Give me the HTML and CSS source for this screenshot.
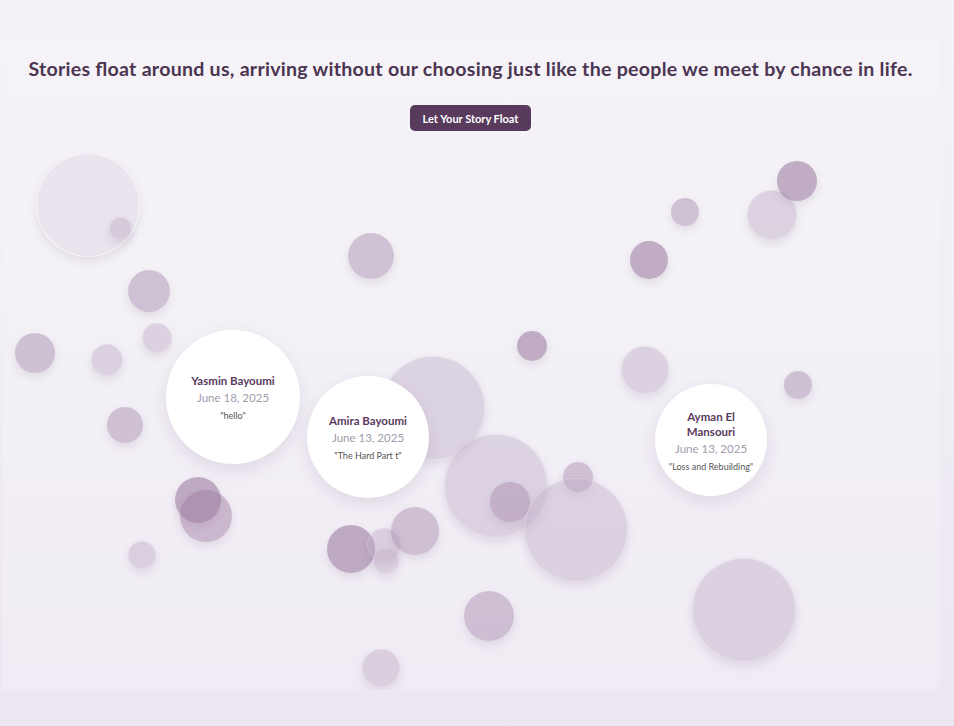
FILE: index.html
```html
<!DOCTYPE html>
<html lang="en">
<head>
<meta charset="utf-8">
<title>Floating Stories</title>
<link rel="stylesheet" href="styles.css">
</head>
<body>
<main class="stage">
  <header class="intro">
    <h1 class="headline">Stories ﬂoat around us, arriving without our choosing just like the people we meet by chance in life.</h1>
    <button class="float-btn">Let Your Story Float</button>
  </header>
  <section class="sky">
    <span class="bubble faint" style="--x:34px;--y:13px;--d:104px"></span>
    <span class="bubble light" style="--x:107px;--y:77px;--d:23px"></span>
    <span class="bubble mid" style="--x:346px;--y:93px;--d:46px"></span>
    <span class="bubble mid" style="--x:126px;--y:130px;--d:42px"></span>
    <span class="bubble mid" style="--x:13px;--y:193px;--d:40px"></span>
    <span class="bubble light" style="--x:89px;--y:204px;--d:32px"></span>
    <span class="bubble light" style="--x:140px;--y:183px;--d:30px"></span>
    <span class="bubble mid" style="--x:105px;--y:267px;--d:36px"></span>
    <span class="bubble dark" style="--x:173px;--y:337px;--d:46px"></span>
    <span class="bubble mid2" style="--x:178px;--y:350px;--d:52px"></span>
    <span class="bubble light" style="--x:126px;--y:401px;--d:28px"></span>
    <span class="bubble big" style="--x:379px;--y:216px;--d:104px"></span>
    <span class="bubble dark" style="--x:515px;--y:191px;--d:30px"></span>
    <span class="bubble big" style="--x:442px;--y:294px;--d:104px"></span>
    <span class="bubble mid" style="--x:488px;--y:342px;--d:40px"></span>
    <span class="bubble mid" style="--x:561px;--y:322px;--d:30px"></span>
    <span class="bubble big" style="--x:522px;--y:338px;--d:104px"></span>
    <span class="bubble dark" style="--x:325px;--y:385px;--d:48px"></span>
    <span class="bubble light" style="--x:365px;--y:388px;--d:34px"></span>
    <span class="bubble light" style="--x:371px;--y:408px;--d:26px"></span>
    <span class="bubble mid" style="--x:389px;--y:367px;--d:48px"></span>
    <span class="bubble mid" style="--x:462px;--y:451px;--d:50px"></span>
    <span class="bubble light" style="--x:360px;--y:509px;--d:38px"></span>
    <span class="bubble big" style="--x:690px;--y:418px;--d:104px"></span>
    <span class="bubble light" style="--x:619px;--y:206px;--d:48px"></span>
    <span class="bubble dark" style="--x:628px;--y:101px;--d:38px"></span>
    <span class="bubble mid" style="--x:669px;--y:58px;--d:28px"></span>
    <span class="bubble light" style="--x:745px;--y:50px;--d:50px"></span>
    <span class="bubble dark" style="--x:775px;--y:21px;--d:40px"></span>
    <span class="bubble mid" style="--x:782px;--y:231px;--d:28px"></span>

    <article class="story" style="--x:164px;--y:190px;--d:134px">
      <h2 class="story-name">Yasmin Bayoumi</h2>
      <p class="story-date">June 18, 2025</p>
      <p class="story-title">"hello"</p>
    </article>
    <article class="story" style="--x:305px;--y:236px;--d:122px">
      <h2 class="story-name">Amira Bayoumi</h2>
      <p class="story-date">June 13, 2025</p>
      <p class="story-title">"The Hard Part t"</p>
    </article>
    <article class="story" style="--x:653px;--y:244px;--d:112px">
      <h2 class="story-name narrow">Ayman El Mansouri</h2>
      <p class="story-date">June 13, 2025</p>
      <p class="story-title">"Loss and Rebuilding"</p>
    </article>
  </section>
</main>
</body>
</html>
```
FILE: styles.css
```css
* { box-sizing: border-box; }

html, body {
  margin: 0;
  height: 100%;
}

body {
  background: linear-gradient(180deg, #f4f2f7 0%, #f1eef5 45%, #ece6f1 100%);
  font-family: "Lato", "Open Sans", sans-serif;
  color: #4a3550;
  overflow: hidden;
}

.stage {
  margin: 40px 0 0 2px;
  width: 937px;
  background: rgba(255, 255, 255, 0.18);
}

.intro {
  display: flex;
  flex-direction: column;
  align-items: center;
  padding-top: 18px;
}

.headline {
  margin: 0;
  font-size: 19.6px;
  line-height: 22px;
  font-weight: 700;
  color: #4b3552;
  letter-spacing: 0.25px;
  text-align: center;
  white-space: nowrap;
}

.float-btn {
  margin-top: 25px;
  height: 26px;
  padding: 0 13px;
  border: none;
  border-radius: 5px;
  background: #573a5c;
  color: #fff;
  font-family: "Lato", sans-serif;
  font-size: 11px;
  font-weight: 700;
}

.sky {
  position: relative;
  height: 550px;
  margin-top: 9px;
  overflow: hidden;
}

.bubble {
  position: absolute;
  left: var(--x);
  top: var(--y);
  width: var(--d);
  height: var(--d);
  border-radius: 50%;
  box-shadow: 0 4px 9px rgba(90, 60, 100, 0.12);
}

.dark { background: rgba(150, 115, 155, 0.55); }
.mid { background: rgba(165, 135, 170, 0.45); }
.mid2 { background: rgba(155, 120, 160, 0.45); }
.light { background: rgba(190, 170, 198, 0.45); border: 1px solid rgba(255,255,255,0.2); }
.big { background: rgba(190, 172, 198, 0.42); border: 1px solid rgba(255,255,255,0.25); }
.faint { background: rgba(225, 218, 230, 0.6); border: 1px solid rgba(255,255,255,0.6); }

.story {
  position: absolute;
  left: var(--x);
  top: var(--y);
  width: var(--d);
  height: var(--d);
  border-radius: 50%;
  background: #fff;
  box-shadow: 0 6px 16px rgba(90, 60, 100, 0.12);
  display: flex;
  flex-direction: column;
  align-items: center;
  justify-content: center;
  text-align: center;
  padding: 0 10px;
}

.story-name {
  margin: 0;
  font-size: 11.5px;
  line-height: 15px;
  font-weight: 700;
  color: #5a3a5e;
}

.narrow { width: 70px; }

.story-date {
  margin: 3px 0 0;
  font-size: 11.5px;
  line-height: 14px;
  color: #a09cad;
}

.story-title {
  margin: 5px 0 0;
  font-size: 9px;
  line-height: 11px;
  color: #555;
}
```
